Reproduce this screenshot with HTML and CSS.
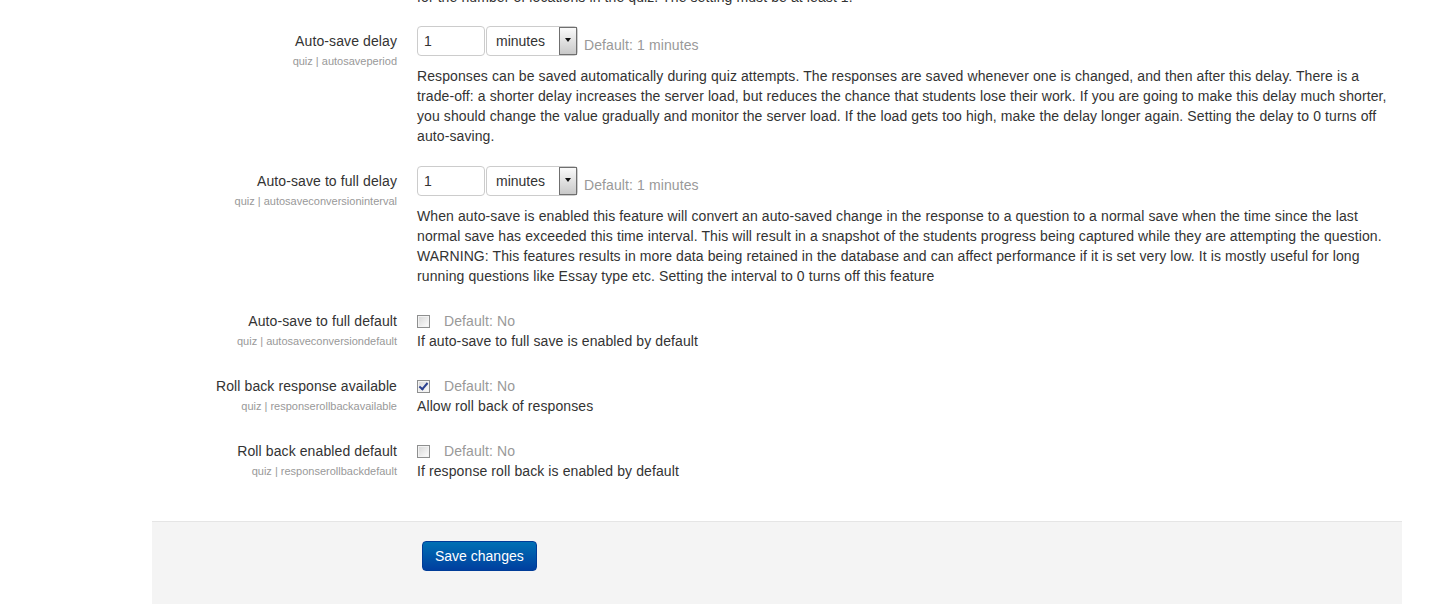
FILE: index.html
```html
<!DOCTYPE html>
<html lang="en">
<head>
    <meta charset="UTF-8">
    <meta name="viewport" content="width=device-width, initial-scale=1.0">
    <title>Quiz settings</title>
    <link rel="stylesheet" href="styles.css">
</head>
<body>

<div class="container">
    <form id="adminsettings">

        <div class="form-item prev-item">
            <div class="form-label"></div>
            <div class="form-setting">
                <div class="form-description">for the number of locations in the quiz. The setting must be at least 1.</div>
            </div>
        </div>

        <div class="form-item">
            <div class="form-label">
                <label for="autosaveperiod">Auto-save delay</label>
                <span class="form-shortname">quiz | autosaveperiod</span>
            </div>
            <div class="form-setting">
                <div class="form-duration">
                    <input type="text" id="autosaveperiod" value="1">
                    <span class="select-wrap">
                        <select>
                            <option>minutes</option>
                        </select>
                        <span class="select-arrow"></span>
                    </span>
                    <span class="form-defaultinfo">Default: 1 minutes</span>
                </div>
                <div class="form-description">Responses can be saved automatically during quiz attempts. The responses are saved whenever one is changed, and then after this delay. There is a <span class="nobr">trade-off:</span> a shorter delay increases the server load, but reduces the chance that students lose their work. If you are going to make this delay much shorter, you should change the value gradually and monitor the server load. If the load gets too high, make the delay longer again. Setting the delay to 0 turns off <span class="nobr">auto-saving.</span></div>
            </div>
        </div>

        <div class="form-item">
            <div class="form-label">
                <label for="autosaveconversioninterval">Auto-save to full delay</label>
                <span class="form-shortname">quiz | autosaveconversioninterval</span>
            </div>
            <div class="form-setting">
                <div class="form-duration">
                    <input type="text" id="autosaveconversioninterval" value="1">
                    <span class="select-wrap">
                        <select>
                            <option>minutes</option>
                        </select>
                        <span class="select-arrow"></span>
                    </span>
                    <span class="form-defaultinfo">Default: 1 minutes</span>
                </div>
                <div class="form-description">When auto-save is enabled this feature will convert an auto-saved change in the response to a question to a normal save when the time since the last normal save has exceeded this time interval. This will result in a snapshot of the students progress being captured while they are attempting the question. WARNING: This features results in more data being retained in the database and can affect performance if it is set very low. It is mostly useful for long running questions like Essay type etc. Setting the interval to 0 turns off this feature</div>
            </div>
        </div>

        <div class="form-item">
            <div class="form-label">
                <label for="autosaveconversiondefault">Auto-save to full default</label>
                <span class="form-shortname">quiz | autosaveconversiondefault</span>
            </div>
            <div class="form-setting checkbox-setting">
                <div class="form-checkbox">
                    <input type="checkbox" id="autosaveconversiondefault">
                    <span class="form-defaultinfo">Default: No</span>
                </div>
                <div class="form-description tight">If auto-save to full save is enabled by default</div>
            </div>
        </div>

        <div class="form-item">
            <div class="form-label">
                <label for="responserollbackavailable">Roll back response available</label>
                <span class="form-shortname">quiz | responserollbackavailable</span>
            </div>
            <div class="form-setting checkbox-setting">
                <div class="form-checkbox">
                    <input type="checkbox" id="responserollbackavailable" checked>
                    <span class="form-defaultinfo">Default: No</span>
                </div>
                <div class="form-description tight">Allow roll back of responses</div>
            </div>
        </div>

        <div class="form-item">
            <div class="form-label">
                <label for="responserollbackdefault">Roll back enabled default</label>
                <span class="form-shortname">quiz | responserollbackdefault</span>
            </div>
            <div class="form-setting checkbox-setting">
                <div class="form-checkbox">
                    <input type="checkbox" id="responserollbackdefault">
                    <span class="form-defaultinfo">Default: No</span>
                </div>
                <div class="form-description tight">If response roll back is enabled by default</div>
            </div>
        </div>

        <div class="form-buttons">
            <button type="submit" class="btn-primary">Save changes</button>
        </div>
    </form>
</div>

</body>
</html>
```

FILE: styles.css
```css
body {
    margin: 0;
    font-family: "Liberation Sans", Arial, sans-serif;
    font-size: 14px;
    line-height: 20px;
    letter-spacing: 0.1px;
    color: #333;
    background: #fff;
    overflow: hidden;
}
.container {
    width: 1250px;
    margin-left: 152px;
}
.form-item {
    display: grid;
    grid-template-columns: 245px 980px;
    column-gap: 20px;
    margin-bottom: 20px;
}
.prev-item {
    margin-top: -13px;
    margin-bottom: 19px;
}
.form-label {
    text-align: right;
    padding-top: 5px;
}
.prev-item .form-label {
    padding-top: 0;
}
.form-label label {
    display: block;
}
.form-shortname {
    display: block;
    font-size: 11px;
    letter-spacing: 0;
    color: #999;
}
.nobr {
    white-space: nowrap;
}
.form-duration {
    display: flex;
    align-items: center;
    height: 30px;
}
.form-duration input {
    box-sizing: border-box;
    width: 68px;
    height: 30px;
    padding: 4px 6px;
    border: 1px solid #ccc;
    border-radius: 4px;
    font: inherit;
    color: #333;
    margin: 0 1px 0 0;
}
.select-wrap {
    position: relative;
    display: inline-block;
    height: 30px;
}
.select-wrap select {
    box-sizing: border-box;
    appearance: none;
    -webkit-appearance: none;
    width: 92px;
    height: 30px;
    padding: 4px 20px 4px 9px;
    border: 1px solid #ccc;
    border-radius: 4px;
    font: inherit;
    color: #333;
    background: #fff;
    margin: 0;
}
.select-arrow {
    position: absolute;
    right: 1px;
    top: 1px;
    width: 16px;
    height: 26px;
    border: 1px solid #6f6f6f;
    background: linear-gradient(#fafafa, #dcdcdc 60%, #c9c9c9);
    pointer-events: none;
}
.select-arrow::after {
    content: "";
    position: absolute;
    left: 5px;
    top: 10px;
    border-left: 3.5px solid transparent;
    border-right: 3.5px solid transparent;
    border-top: 4px solid #111;
}
.form-duration .form-defaultinfo {
    margin-left: 6px;
    padding-top: 8px;
}
.form-defaultinfo {
    color: #999;
}
.form-description {
    margin-top: 10px;
}
.form-description.tight {
    margin-top: 0;
}
.prev-item .form-description {
    margin-top: 0;
}
.checkbox-setting {
    padding-top: 5px;
}
.form-checkbox {
    display: flex;
    align-items: center;
    height: 20px;
}
.form-checkbox input {
    appearance: none;
    -webkit-appearance: none;
    position: relative;
    box-sizing: border-box;
    width: 13px;
    height: 13px;
    margin: 0 14px 0 0;
    border: 1px solid #8e8f8f;
    background: linear-gradient(135deg, #d6d6d6, #f6f6f6 80%, #fff);
    box-shadow: inset 0 0 0 1px #f3f3f3;
}
.form-checkbox input:checked::after {
    content: "";
    position: absolute;
    left: 3px;
    top: 0px;
    width: 3px;
    height: 7px;
    border: solid #2b418f;
    border-width: 0 2px 2px 0;
    transform: rotate(40deg);
}
.form-buttons {
    margin-top: 40px;
    border-top: 1px solid #e5e5e5;
    background: #f4f4f4;
    padding: 19px 0 40px 270px;
    height: 60px;
}
.btn-primary {
    font: inherit;
    color: #fff;
    padding: 4px 12px;
    border: 1px solid #003c98;
    border-radius: 4px;
    background: linear-gradient(#0070b4, #003f9f);
    cursor: pointer;
}
```
